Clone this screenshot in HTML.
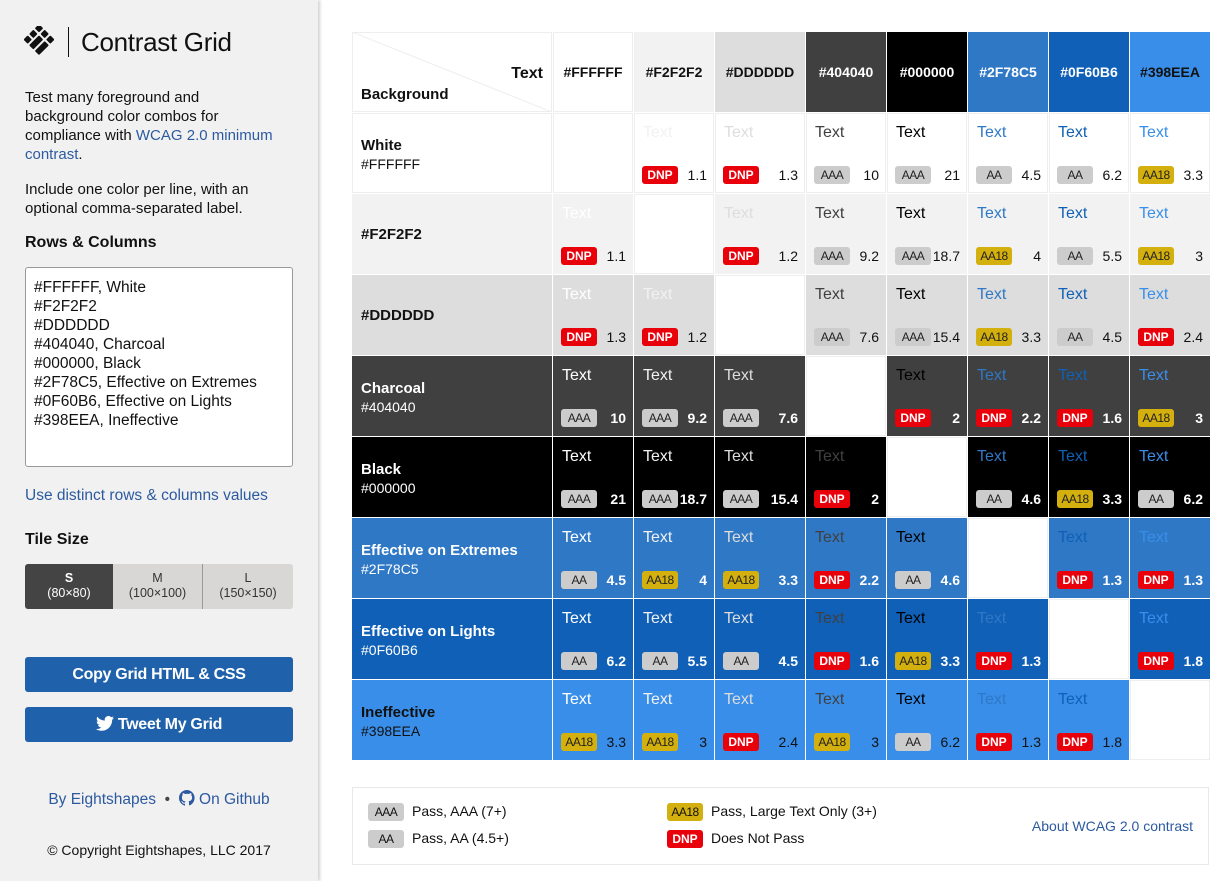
<!DOCTYPE html>
<html><head><meta charset="utf-8"><style>
*{box-sizing:border-box;margin:0;padding:0}
body{width:1217px;height:881px;background:#fff;font-family:"Liberation Sans",sans-serif;color:#111;position:relative;overflow:hidden}
#side{position:absolute;left:0;top:0;width:318px;height:881px;background:#f2f1f1;box-shadow:2px 0 3px rgba(0,0,0,.18)}
.abs{position:absolute}
h1{position:absolute;left:81px;top:27px;font-size:26px;font-weight:normal;letter-spacing:-.3px}
.p{position:absolute;left:25px;font-size:15px;line-height:19px;width:285px}
a,.lk{color:#2c5aa0;text-decoration:none}
.lbl{position:absolute;left:25px;font-size:16px;font-weight:bold}
#ta{position:absolute;left:25px;top:267px;width:268px;height:200px;background:#fff;border:1px solid #999;border-radius:3px;padding:10px 0 0 8px;font-size:15.5px;line-height:19px;white-space:pre}
#seg{position:absolute;left:25px;top:564px;width:268px;height:45px;border-radius:3px;overflow:hidden;display:flex;background:#d9d6d6}
#seg div{text-align:center;font-size:12.5px;line-height:15px;padding-top:7px;color:#333}
.btn{position:absolute;left:25px;width:268px;height:35px;background:#1f62ab;border-radius:3px;color:#fff;font-weight:bold;font-size:16px;text-align:center;line-height:35px;letter-spacing:-.3px}
#grid{position:absolute;left:352px;top:32px;display:grid;grid-template-columns:200px 80px 80px 90px 80px 80px 80px 80px 80px;grid-template-rows:repeat(9,80px);gap:1px;background:#fff}
#grid>div{position:relative}
.w{box-shadow:inset 0 0 0 1px #eee}
.h{font-weight:bold;font-size:14px;text-align:center;line-height:80px}
.b0{background:#fff}.b1{background:#f2f2f2}.b2{background:#ddd}.b3{background:#404040}.b4{background:#000}.b5{background:#2f78c5}.b6{background:#0f60b6}.b7{background:#398eea}
.t0{color:#fff}.t1{color:#f2f2f2}.t2{color:#ddd}.t3{color:#404040}.t4{color:#000}.t5{color:#2f78c5}.t6{color:#0f60b6}.t7{color:#398eea}
.tx{position:absolute;left:9px;top:11px;font-size:16px}
.g{position:absolute;left:8px;top:53px;width:36px;height:18px;border-radius:3px;font-size:12px;line-height:18px;text-align:center;font-style:normal;color:#222;background:#ccc;letter-spacing:-.5px}
.aa18{background:#d4b00e}
.dnp{background:#e8000b;color:#fff;font-weight:bold;letter-spacing:0}
.n{position:absolute;right:7px;top:53px;font-size:14px;line-height:18px;font-weight:normal;color:#111}
.dk .n{color:#fff;font-weight:bold}
.rl{padding:24px 9px;font-size:15px;font-weight:bold;line-height:18px}
.rl span{display:block;font-weight:normal;font-size:14px}
.leg{position:absolute;font-size:14px}
.leg i{display:inline-block;width:36px;height:18px;border-radius:3px;font-size:12px;line-height:18px;text-align:center;font-style:normal;background:#ccc;margin-right:8px;vertical-align:middle;letter-spacing:-.5px}
</style></head><body>
<div id="side">
<svg class="abs" style="left:24px;top:26px" width="30" height="30" viewBox="0 0 30 30">
<g transform="rotate(45 15 15)" fill="#111">
<rect x="3" y="3" width="6" height="6" rx="1"/><rect x="11" y="3" width="6" height="6" rx="1"/><rect x="19" y="3" width="6" height="6" rx="1"/>
<rect x="3" y="11" width="6" height="6" rx="1"/><rect x="11" y="11" width="6" height="14" rx="1"/><rect x="19" y="11" width="6" height="14" rx="1"/>
<rect x="3" y="19" width="6" height="6" rx="1"/>
</g></svg>
<div class="abs" style="left:68px;top:27px;width:1px;height:30px;background:#111"></div>
<h1>Contrast Grid</h1>
<div class="p" style="top:88px">Test many foreground and<br>background color combos for<br>compliance with <a>WCAG 2.0 minimum<br>contrast</a>.</div>
<div class="p" style="top:180px">Include one color per line, with an<br>optional comma-separated label.</div>
<div class="lbl" style="top:234px">Rows &amp; Columns</div>
<div id="ta">#FFFFFF, White
#F2F2F2
#DDDDDD
#404040, Charcoal
#000000, Black
#2F78C5, Effective on Extremes
#0F60B6, Effective on Lights
#398EEA, Ineffective</div>
<div class="p lk" style="top:486px;font-size:15.5px">Use distinct rows &amp; columns values</div>
<div class="lbl" style="top:531px">Tile Size</div>
<div id="seg"><div style="width:88px;background:#444;color:#fff"><b>S</b><br>(80×80)</div><div style="width:90px;border-right:1px solid #999">M<br>(100×100)</div><div style="width:90px">L<br>(150×150)</div></div>
<div class="btn" style="top:657px">Copy Grid HTML &amp; CSS</div>
<div class="btn" style="top:707px"><svg width="18" height="15" viewBox="0 0 24 20" style="vertical-align:-2px;margin-right:4px"><path fill="#fff" d="M24 2.4a9.8 9.8 0 0 1-2.8.8A4.9 4.9 0 0 0 23.3.5a9.9 9.9 0 0 1-3.1 1.2A4.9 4.9 0 0 0 11.8 6.2 14 14 0 0 1 1.7 1 4.9 4.9 0 0 0 3.2 7.6 4.9 4.9 0 0 1 1 7v.1a4.9 4.9 0 0 0 3.9 4.8 4.9 4.9 0 0 1-2.2.1 4.9 4.9 0 0 0 4.6 3.4A9.9 9.9 0 0 1 0 17.5 14 14 0 0 0 7.5 19.7c9.1 0 14-7.5 14-14v-.6A10 10 0 0 0 24 2.4z"/></svg>Tweet My Grid</div>
<div class="abs lk" style="left:0;width:318px;top:790px;text-align:center;font-size:15.5px">By Eightshapes <span style="color:#444">&nbsp;•&nbsp;</span> <svg width="16" height="16" viewBox="0 0 16 16" style="vertical-align:-2px"><path fill="#2c5aa0" d="M8 0a8 8 0 0 0-2.5 15.6c.4 0 .5-.2.5-.4v-1.5c-2.2.5-2.7-1-2.7-1-.4-.9-.9-1.2-.9-1.2-.7-.5.1-.5.1-.5.8.1 1.2.8 1.2.8.7 1.3 1.900.9 2.3.7.1-.5.3-.9.5-1.1-1.8-.2-3.6-.9-3.6-4 0-.9.3-1.6.8-2.1-.1-.2-.4-1 .1-2.1 0 0 .7-.2 2.2.8a7.6 7.6 0 0 1 4 0c1.5-1 2.2-.8 2.2-.8.4 1.1.2 1.9.1 2.1.5.6.8 1.3.8 2.1 0 3.1-1.9 3.7-3.6 3.9.3.3.5.8.5 1.5v2.2c0 .2.1.5.6.4A8 8 0 0 0 8 0z"/></svg> On Github</div>
<div class="abs" style="left:0;width:318px;top:842px;text-align:center;font-size:14px">© Copyright Eightshapes, LLC 2017</div>
</div>

<div id="grid">
<div class="w"><svg class="abs" style="left:0;top:0" width="200" height="80"><line x1="0" y1="0" x2="200" y2="80" stroke="#eee"/></svg><b class="abs" style="right:9px;top:33px;font-size:16px">Text</b><b class="abs" style="left:9px;top:54px;font-size:15px">Background</b></div>
<div class="h w b0">#FFFFFF</div><div class="h b1">#F2F2F2</div><div class="h b2">#DDDDDD</div><div class="h b3 t0">#404040</div><div class="h b4 t0">#000000</div><div class="h b5 t0">#2F78C5</div><div class="h b6 t0">#0F60B6</div><div class="h b7">#398EEA</div>

<div class="w rl">White<span>#FFFFFF</span></div>
<div class="w"></div>
<div class="w"><span class="tx t1">Text</span><i class="g dnp">DNP</i><b class="n">1.1</b></div>
<div class="w"><span class="tx t2">Text</span><i class="g dnp">DNP</i><b class="n">1.3</b></div>
<div class="w"><span class="tx t3">Text</span><i class="g">AAA</i><b class="n">10</b></div>
<div class="w"><span class="tx t4">Text</span><i class="g">AAA</i><b class="n">21</b></div>
<div class="w"><span class="tx t5">Text</span><i class="g">AA</i><b class="n">4.5</b></div>
<div class="w"><span class="tx t6">Text</span><i class="g">AA</i><b class="n">6.2</b></div>
<div class="w"><span class="tx t7">Text</span><i class="g aa18">AA18</i><b class="n">3.3</b></div>

<div class="b1 rl" style="padding-top:32px">#F2F2F2</div>
<div class="b1"><span class="tx t0">Text</span><i class="g dnp">DNP</i><b class="n">1.1</b></div>
<div class="w"></div>
<div class="b1"><span class="tx t2">Text</span><i class="g dnp">DNP</i><b class="n">1.2</b></div>
<div class="b1"><span class="tx t3">Text</span><i class="g">AAA</i><b class="n">9.2</b></div>
<div class="b1"><span class="tx t4">Text</span><i class="g">AAA</i><b class="n">18.7</b></div>
<div class="b1"><span class="tx t5">Text</span><i class="g aa18">AA18</i><b class="n">4</b></div>
<div class="b1"><span class="tx t6">Text</span><i class="g">AA</i><b class="n">5.5</b></div>
<div class="b1"><span class="tx t7">Text</span><i class="g aa18">AA18</i><b class="n">3</b></div>

<div class="b2 rl" style="padding-top:32px">#DDDDDD</div>
<div class="b2"><span class="tx t0">Text</span><i class="g dnp">DNP</i><b class="n">1.3</b></div>
<div class="b2"><span class="tx t1">Text</span><i class="g dnp">DNP</i><b class="n">1.2</b></div>
<div class="w"></div>
<div class="b2"><span class="tx t3">Text</span><i class="g">AAA</i><b class="n">7.6</b></div>
<div class="b2"><span class="tx t4">Text</span><i class="g">AAA</i><b class="n">15.4</b></div>
<div class="b2"><span class="tx t5">Text</span><i class="g aa18">AA18</i><b class="n">3.3</b></div>
<div class="b2"><span class="tx t6">Text</span><i class="g">AA</i><b class="n">4.5</b></div>
<div class="b2"><span class="tx t7">Text</span><i class="g dnp">DNP</i><b class="n">2.4</b></div>

<div class="b3 t0 rl">Charcoal<span>#404040</span></div>
<div class="b3 dk"><span class="tx t0">Text</span><i class="g">AAA</i><b class="n">10</b></div>
<div class="b3 dk"><span class="tx t1">Text</span><i class="g">AAA</i><b class="n">9.2</b></div>
<div class="b3 dk"><span class="tx t2">Text</span><i class="g">AAA</i><b class="n">7.6</b></div>
<div class="w"></div>
<div class="b3 dk"><span class="tx t4">Text</span><i class="g dnp">DNP</i><b class="n">2</b></div>
<div class="b3 dk"><span class="tx t5">Text</span><i class="g dnp">DNP</i><b class="n">2.2</b></div>
<div class="b3 dk"><span class="tx t6">Text</span><i class="g dnp">DNP</i><b class="n">1.6</b></div>
<div class="b3 dk"><span class="tx t7">Text</span><i class="g aa18">AA18</i><b class="n">3</b></div>

<div class="b4 t0 rl">Black<span>#000000</span></div>
<div class="b4 dk"><span class="tx t0">Text</span><i class="g">AAA</i><b class="n">21</b></div>
<div class="b4 dk"><span class="tx t1">Text</span><i class="g">AAA</i><b class="n">18.7</b></div>
<div class="b4 dk"><span class="tx t2">Text</span><i class="g">AAA</i><b class="n">15.4</b></div>
<div class="b4 dk"><span class="tx t3">Text</span><i class="g dnp">DNP</i><b class="n">2</b></div>
<div class="w"></div>
<div class="b4 dk"><span class="tx t5">Text</span><i class="g">AA</i><b class="n">4.6</b></div>
<div class="b4 dk"><span class="tx t6">Text</span><i class="g aa18">AA18</i><b class="n">3.3</b></div>
<div class="b4 dk"><span class="tx t7">Text</span><i class="g">AA</i><b class="n">6.2</b></div>

<div class="b5 t0 rl">Effective on Extremes<span>#2F78C5</span></div>
<div class="b5 dk"><span class="tx t0">Text</span><i class="g">AA</i><b class="n">4.5</b></div>
<div class="b5 dk"><span class="tx t1">Text</span><i class="g aa18">AA18</i><b class="n">4</b></div>
<div class="b5 dk"><span class="tx t2">Text</span><i class="g aa18">AA18</i><b class="n">3.3</b></div>
<div class="b5 dk"><span class="tx t3">Text</span><i class="g dnp">DNP</i><b class="n">2.2</b></div>
<div class="b5 dk"><span class="tx t4">Text</span><i class="g">AA</i><b class="n">4.6</b></div>
<div class="w"></div>
<div class="b5 dk"><span class="tx t6">Text</span><i class="g dnp">DNP</i><b class="n">1.3</b></div>
<div class="b5 dk"><span class="tx t7">Text</span><i class="g dnp">DNP</i><b class="n">1.3</b></div>

<div class="b6 t0 rl">Effective on Lights<span>#0F60B6</span></div>
<div class="b6 dk"><span class="tx t0">Text</span><i class="g">AA</i><b class="n">6.2</b></div>
<div class="b6 dk"><span class="tx t1">Text</span><i class="g">AA</i><b class="n">5.5</b></div>
<div class="b6 dk"><span class="tx t2">Text</span><i class="g">AA</i><b class="n">4.5</b></div>
<div class="b6 dk"><span class="tx t3">Text</span><i class="g dnp">DNP</i><b class="n">1.6</b></div>
<div class="b6 dk"><span class="tx t4">Text</span><i class="g aa18">AA18</i><b class="n">3.3</b></div>
<div class="b6 dk"><span class="tx t5">Text</span><i class="g dnp">DNP</i><b class="n">1.3</b></div>
<div class="w"></div>
<div class="b6 dk"><span class="tx t7">Text</span><i class="g dnp">DNP</i><b class="n">1.8</b></div>

<div class="b7 rl">Ineffective<span>#398EEA</span></div>
<div class="b7"><span class="tx t0">Text</span><i class="g aa18">AA18</i><b class="n">3.3</b></div>
<div class="b7"><span class="tx t1">Text</span><i class="g aa18">AA18</i><b class="n">3</b></div>
<div class="b7"><span class="tx t2">Text</span><i class="g dnp">DNP</i><b class="n">2.4</b></div>
<div class="b7"><span class="tx t3">Text</span><i class="g aa18">AA18</i><b class="n">3</b></div>
<div class="b7"><span class="tx t4">Text</span><i class="g">AA</i><b class="n">6.2</b></div>
<div class="b7"><span class="tx t5">Text</span><i class="g dnp">DNP</i><b class="n">1.3</b></div>
<div class="b7"><span class="tx t6">Text</span><i class="g dnp">DNP</i><b class="n">1.8</b></div>
<div class="w"></div>
</div>

<div class="abs" style="left:352px;top:787px;width:857px;height:78px;border:1px solid #e8e8e8"></div>
<div class="leg" style="left:368px;top:803px"><i>AAA</i>Pass, AAA (7+)</div>
<div class="leg" style="left:368px;top:830px"><i>AA</i>Pass, AA (4.5+)</div>
<div class="leg" style="left:667px;top:803px"><i style="background:#d4b00e">AA18</i>Pass, Large Text Only (3+)</div>
<div class="leg" style="left:667px;top:830px"><i style="background:#e8000b;color:#fff;font-weight:bold;letter-spacing:0">DNP</i>Does Not Pass</div>
<div class="leg lk" style="right:24px;top:818px">About WCAG 2.0 contrast</div>
</body></html>
